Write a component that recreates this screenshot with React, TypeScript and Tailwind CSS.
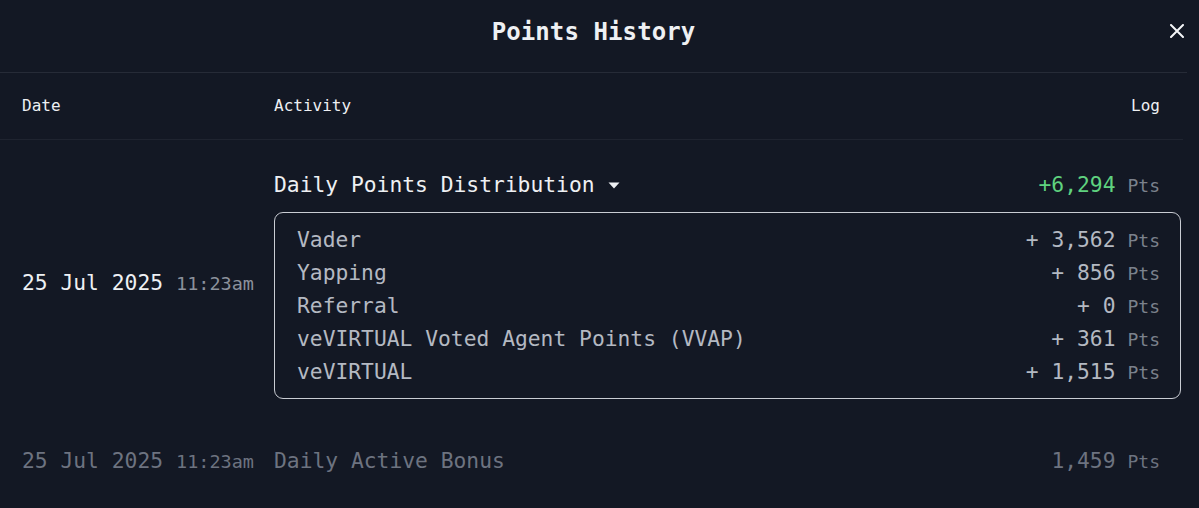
import React from "react";

const mono = "font-['DejaVu_Sans_Mono','Liberation_Mono',monospace]";

const breakdown = [
  { label: "Vader", value: "3,562" },
  { label: "Yapping", value: "856" },
  { label: "Referral", value: "0" },
  { label: "veVIRTUAL Voted Agent Points (VVAP)", value: "361" },
  { label: "veVIRTUAL", value: "1,515" },
];

function CloseIcon() {
  return (
    <svg width="14" height="14" viewBox="0 0 14 14" fill="none">
      <path d="M1 1L13 13M13 1L1 13" stroke="#f5f6f8" strokeWidth="2" strokeLinecap="round" />
    </svg>
  );
}

function Caret() {
  return (
    <svg width="12" height="7" viewBox="0 0 12 7" className="ml-[13px]">
      <path d="M0.5 0.5H11.5L6 6.5Z" fill="#eef0f3" />
    </svg>
  );
}

export default function App() {
  return (
    <div className={`${mono} w-full h-[508px] overflow-hidden bg-[#131824] text-[#eef0f3]`}>
      <div className="relative h-[73px] flex items-center justify-center border-b border-[#262b37] mr-[12px]">
        <h1 className="text-[24px] font-bold tracking-[0.1px] mt-[-8px]">Points History</h1>
        <button className="absolute right-[3px] top-[24px]">
          <CloseIcon />
        </button>
      </div>

      <div className="grid grid-cols-[252px_1fr_auto] items-center h-[67px] pl-[22px] pr-[23px] border-b border-[#1f2430] mr-[16px] text-[16px] text-[#eef0f3]">
        <span>Date</span>
        <span>Activity</span>
        <span>Log</span>
      </div>

      <div className="grid grid-cols-[252px_1fr] items-center pl-[22px] pr-[18px] pt-[30px]">
        <div className="flex items-baseline mt-[-4px]">
          <span className="text-[21.3px] font-medium">25 Jul 2025</span>
          <span className="ml-[13px] text-[18.5px] text-[#8b919c]">11:23am</span>
        </div>
        <div>
          <div className="flex items-center justify-between h-[30px] pr-[21px]">
            <div className="flex items-center text-[21.3px]">
              <span>Daily Points Distribution</span>
              <Caret />
            </div>
            <div className="flex items-baseline">
              <span className="text-[21.3px] text-[#5fd27f]">+6,294</span>
              <span className="ml-[12px] text-[18px] text-[#7b818c]">Pts</span>
            </div>
          </div>
          <div className="mt-[12px] rounded-[9px] border border-[#c9ccd3] py-[10px] pl-[22px] pr-[20px]">
            {breakdown.map((row) => (
              <div key={row.label} className="flex items-center justify-between h-[33px]">
                <span className="text-[21.3px] text-[#b4b9c2]">{row.label}</span>
                <div className="flex items-baseline">
                  <span className="text-[21.3px] text-[#b4b9c2]">+ {row.value}</span>
                  <span className="ml-[12px] text-[18px] text-[#7b818c]">Pts</span>
                </div>
              </div>
            ))}
          </div>
        </div>
      </div>

      <div className="grid grid-cols-[252px_1fr_auto] items-center h-[30px] mt-[46px] pl-[22px] pr-[39px] text-[#6d7380]">
        <div className="flex items-baseline">
          <span className="text-[21.3px]">25 Jul 2025</span>
          <span className="ml-[13px] text-[18.5px]">11:23am</span>
        </div>
        <span className="text-[21.3px]">Daily Active Bonus</span>
        <div className="flex items-baseline">
          <span className="text-[21.3px]">1,459</span>
          <span className="ml-[12px] text-[18px]">Pts</span>
        </div>
      </div>
    </div>
  );
}
